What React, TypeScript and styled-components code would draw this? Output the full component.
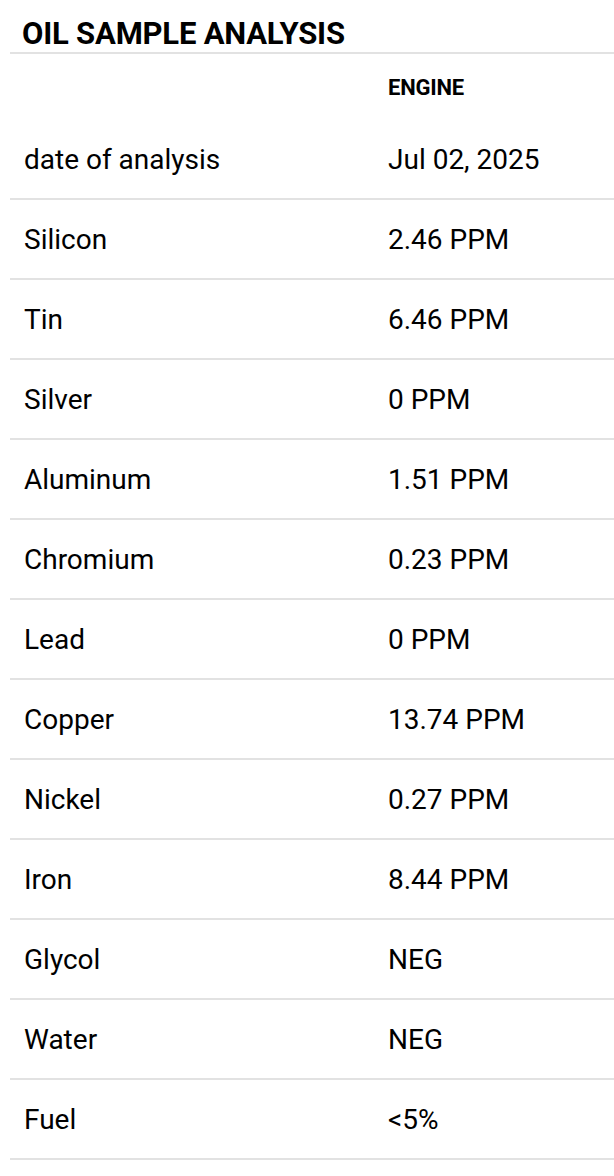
import React, {FC} from 'react';
import styled, {createGlobalStyle} from 'styled-components';

type Reading = {
  label: string;
  value: string;
};

const readings: Reading[] = [
  {label: 'date of analysis', value: 'Jul 02, 2025'},
  {label: 'Silicon', value: '2.46 PPM'},
  {label: 'Tin', value: '6.46 PPM'},
  {label: 'Silver', value: '0 PPM'},
  {label: 'Aluminum', value: '1.51 PPM'},
  {label: 'Chromium', value: '0.23 PPM'},
  {label: 'Lead', value: '0 PPM'},
  {label: 'Copper', value: '13.74 PPM'},
  {label: 'Nickel', value: '0.27 PPM'},
  {label: 'Iron', value: '8.44 PPM'},
  {label: 'Glycol', value: 'NEG'},
  {label: 'Water', value: 'NEG'},
  {label: 'Fuel', value: '<5%'},
];

const App: FC = () => {
  return (
    <>
      <GlobalStyle />
      <StyledSection>
        <StyledTitle>OIL SAMPLE ANALYSIS</StyledTitle>
        <StyledHeaderRow>
          <span />
          <StyledColumnHead>ENGINE</StyledColumnHead>
        </StyledHeaderRow>
        {readings.map((r) => (
          <StyledRow key={r.label}>
            <StyledCell>{r.label}</StyledCell>
            <StyledCell>{r.value}</StyledCell>
          </StyledRow>
        ))}
      </StyledSection>
    </>
  );
};

const GlobalStyle = createGlobalStyle`
  html, body {
    margin: 0;
    padding: 0;
    background: #fff;
  }
  body {
    font-family: Roboto, "Liberation Sans", sans-serif;
    color: #000;
  }
`;

const StyledSection = styled.section`
  padding-left: 10px;
`;

const StyledTitle = styled.h2`
  margin: 0;
  padding: 17px 0 2px 12px;
  font-size: 31px;
  font-weight: 700;
  line-height: 33px;
  letter-spacing: -0.2px;
  border-bottom: 2px solid #e2e2e2;
`;

const StyledHeaderRow = styled.div`
  display: grid;
  grid-template-columns: 364px 1fr;
  align-items: center;
  height: 66px;
  padding-left: 14px;
`;

const StyledColumnHead = styled.span`
  font-size: 22px;
  font-weight: 700;
  letter-spacing: -0.2px;
`;

const StyledRow = styled.div`
  display: grid;
  grid-template-columns: 364px 1fr;
  align-items: center;
  height: 78px;
  padding-left: 14px;
  border-bottom: 2px solid #e2e2e2;
`;

const StyledCell = styled.span`
  font-size: 28px;
  font-weight: 400;
`;

export default App;
